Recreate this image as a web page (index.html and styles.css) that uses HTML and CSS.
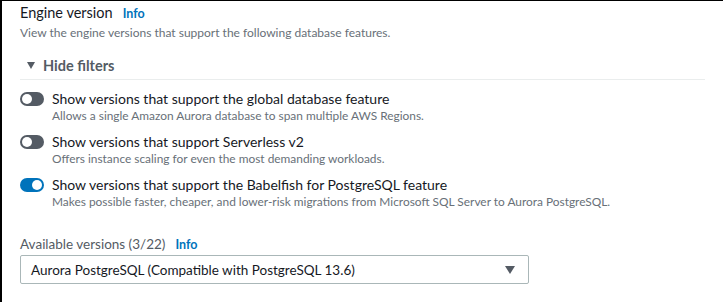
FILE: index.html
```html
<!DOCTYPE html>
<html lang="en">
<head>
    <meta charset="UTF-8">
    <title>Engine version</title>
    <link rel="stylesheet" href="styles.css">
</head>
<body>
    <div class="panel">
        <div class="header">
            <span class="title">Engine version</span>
            <a class="info" href="#">Info</a>
        </div>
        <p class="description">View the engine versions that support the following database features.</p>

        <div class="filters-toggle">
            <span class="caret"></span>
            <span>Hide filters</span>
        </div>

        <div class="filters">
            <label class="toggle-row">
                <span class="toggle"></span>
                <span class="toggle-text">
                    <span class="toggle-label">Show versions that support the global database feature</span>
                    <span class="toggle-desc">Allows a single Amazon Aurora database to span multiple AWS Regions.</span>
                </span>
            </label>
            <label class="toggle-row">
                <span class="toggle"></span>
                <span class="toggle-text">
                    <span class="toggle-label">Show versions that support Serverless v2</span>
                    <span class="toggle-desc">Offers instance scaling for even the most demanding workloads.</span>
                </span>
            </label>
            <label class="toggle-row">
                <span class="toggle on"></span>
                <span class="toggle-text">
                    <span class="toggle-label">Show versions that support the Babelfish for PostgreSQL feature</span>
                    <span class="toggle-desc">Makes possible faster, cheaper, and lower-risk migrations from Microsoft SQL Server to Aurora PostgreSQL.</span>
                </span>
            </label>
        </div>

        <div class="field-label">
            <span>Available versions (3/22)</span>
            <a class="info" href="#">Info</a>
        </div>
        <div class="select">
            <span>Aurora PostgreSQL (Compatible with PostgreSQL 13.6)</span>
            <span class="select-caret"></span>
        </div>
    </div>
</body>
</html>
```

FILE: styles.css
```css
/* Marco general */
html, body {
    margin: 0;
    height: 100%;
    background-color: #fff;
}

body {
    font-family: Lato, "Open Sans", sans-serif;
    color: #16191f;
}

.panel {
    box-sizing: border-box;
    height: 100%;
    width: 723px;
    border-left: 2px solid #000;
    border-top: 1px solid #000;
    padding: 3px 18px 0 18px;
}

/* Cabecera */
.header {
    display: flex;
    align-items: baseline;
    gap: 10px;
    height: 20px;
}

.title {
    font-size: 14.5px;
}

.info {
    color: #0073bb;
    font-size: 12.5px;
    font-weight: bold;
    text-decoration: none;
}

.description {
    margin: 1px 0 0 0;
    font-size: 12px;
    color: #687078;
    line-height: 16px;
}

/* Mostrar / ocultar filtros */
.filters-toggle {
    display: flex;
    align-items: center;
    gap: 8px;
    margin-top: 16px;
    padding: 0 0 5px 7px;
    font-size: 14.5px;
    font-weight: bold;
    color: #545b64;
    border-bottom: 1px solid #eaeded;
    width: 678px;
}

.caret {
    width: 0;
    height: 0;
    border-left: 4px solid transparent;
    border-right: 4px solid transparent;
    border-top: 7px solid #545b64;
}

/* Interruptores */
.filters {
    display: flex;
    flex-direction: column;
    gap: 9px;
    margin-top: 9px;
}

.toggle-row {
    display: flex;
    gap: 8px;
}

.toggle {
    position: relative;
    flex: none;
    width: 24px;
    height: 14px;
    margin-top: 3px;
    border-radius: 7px;
    background-color: #545b64;
}

.toggle::after {
    content: "";
    position: absolute;
    top: 2px;
    left: 2px;
    width: 10px;
    height: 10px;
    border-radius: 50%;
    background-color: #fff;
}

.toggle.on {
    background-color: #0073bb;
}

.toggle.on::after {
    left: 12px;
}

.toggle-text {
    display: flex;
    flex-direction: column;
}

.toggle-label {
    font-size: 14px;
    line-height: 19px;
}

.toggle-desc {
    font-size: 11.9px;
    line-height: 15px;
    color: #687078;
}

/* Versiones disponibles */
.field-label {
    display: flex;
    align-items: baseline;
    gap: 10px;
    margin-top: 27px;
    font-size: 13.5px;
    color: #545b64;
}

.select {
    box-sizing: border-box;
    display: flex;
    align-items: center;
    justify-content: space-between;
    width: 509px;
    height: 29px;
    margin-top: 3px;
    padding: 0 13px 0 10px;
    border: 1px solid #aab7b8;
    border-radius: 2px;
    font-size: 13.5px;
}

.select-caret {
    width: 0;
    height: 0;
    border-left: 5px solid transparent;
    border-right: 5px solid transparent;
    border-top: 8px solid #545b64;
}
```
